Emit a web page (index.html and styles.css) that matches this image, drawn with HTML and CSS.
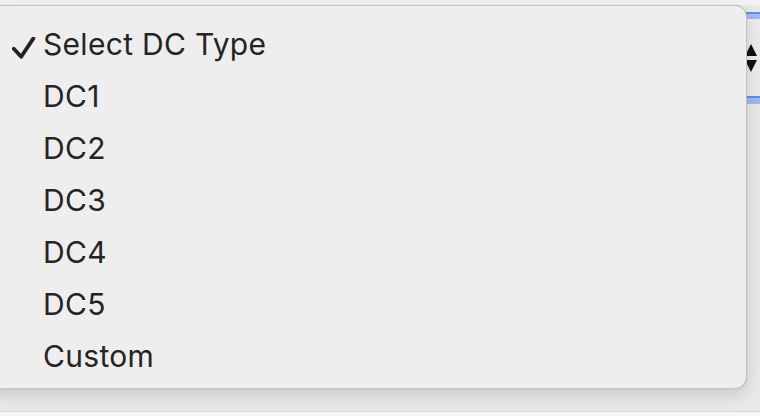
FILE: index.html
```html
<!DOCTYPE html>
<html>
<head>
<meta charset="utf-8">
<link rel="stylesheet" href="styles.css">
</head>
<body>
<div class="page">
  <div class="form-row">
    <div class="field"></div>
    <div class="select">
      <div class="ring-top"></div>
      <div class="select-body">
        <svg class="arrows" width="14" height="30" viewBox="0 0 14 30">
          <path d="M7 1 L13 13 L1 13 Z" fill="#111"/>
          <path d="M1 17 L13 17 L7 29 Z" fill="#111"/>
        </svg>
      </div>
      <div class="ring-bottom"></div>
    </div>
  </div>
  <div class="menu">
    <div class="item selected">
      <svg class="check" width="24" height="24" viewBox="0 0 24 24">
        <path d="M1.8 11.8 L9.2 19.8 L21.4 1.4" fill="none" stroke="#222" stroke-width="3.8" stroke-linecap="round" stroke-linejoin="round"/>
      </svg>
      <span class="label">Select DC Type</span>
    </div>
    <div class="item"><span class="label">DC1</span></div>
    <div class="item"><span class="label">DC2</span></div>
    <div class="item"><span class="label">DC3</span></div>
    <div class="item"><span class="label">DC4</span></div>
    <div class="item"><span class="label">DC5</span></div>
    <div class="item"><span class="label">Custom</span></div>
  </div>
</div>
</body>
</html>
```
FILE: styles.css
```css
html, body {
  margin: 0;
  padding: 0;
}
body {
  width: 760px;
  height: 416px;
  overflow: hidden;
  background: #f5f5f5;
  font-family: Inter, "Liberation Sans", sans-serif;
}
.page {
  position: relative;
  height: 412px;
  background: #e9e9e9;
  border-bottom: 1px solid #d8d8d8;
  border-top: 5px solid #f2f2f2;
  box-sizing: border-box;
}
.form-row {
  display: flex;
  padding-top: 7px;
}
.field {
  flex: 1;
}
.select {
  width: 16px;
  display: flex;
  flex-direction: column;
}
.ring-top {
  height: 7px;
  background: #9fbaf2;
  border-top: 2px solid #5f8fe8;
  box-sizing: border-box;
}
.ring-bottom {
  height: 8px;
  background: #9fbaf2;
  border-top: 2px solid #5f8fe8;
  box-sizing: border-box;
}
.select-body {
  height: 77px;
  background: #ebebeb;
  display: flex;
  align-items: center;
}
.menu {
  position: absolute;
  left: -12px;
  top: 0;
  width: 759px;
  box-sizing: border-box;
  background: #eeeeee;
  border: 1px solid #c3c3c3;
  border-radius: 12px;
  box-shadow: 0 6px 16px rgba(0, 0, 0, 0.14), 0 0 1px rgba(0,0,0,0.2);
  padding: 12px 0 6px 0;
}
.item {
  display: flex;
  align-items: center;
  height: 52px;
  padding-left: 54px;
  position: relative;
  font-size: 30px;
  color: #242424;
  line-height: 52px;
}
.check {
  position: absolute;
  left: 23px;
  top: 19px;
}
.label {
  letter-spacing: 0.3px;
}
```
